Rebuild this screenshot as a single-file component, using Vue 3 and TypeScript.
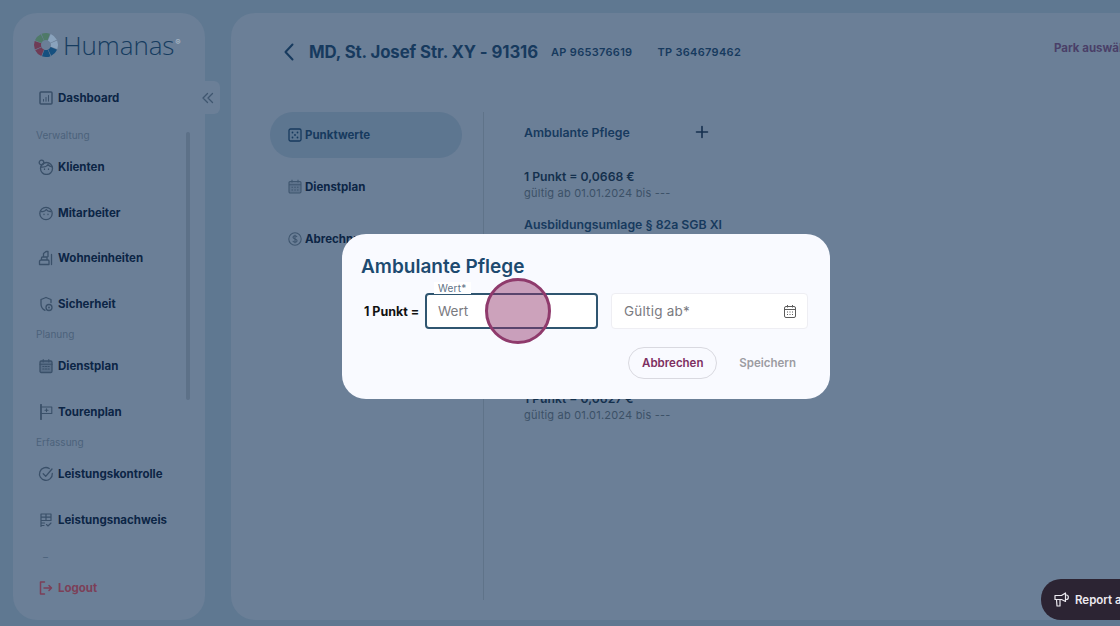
<script setup lang="ts">
type NavRow = { label: string; icon: string } | { section: string }

const navRows: NavRow[] = [
  { label: 'Dashboard', icon: 'chart' },
  { section: 'Verwaltung' },
  { label: 'Klienten', icon: 'client' },
  { label: 'Mitarbeiter', icon: 'face' },
  { label: 'Wohneinheiten', icon: 'home' },
  { label: 'Sicherheit', icon: 'shield' },
  { section: 'Planung' },
  { label: 'Dienstplan', icon: 'calendar' },
  { label: 'Tourenplan', icon: 'flag' },
  { section: 'Erfassung' },
  { label: 'Leistungskontrolle', icon: 'check' },
  { label: 'Leistungsnachweis', icon: 'sheet' },
  { section: '–' }
]

const logoColors = ['#4f7a68', '#8aa3bd', '#8aa3bd', '#16507f', '#16507f', '#6f3c56', '#6f3c56', '#4f7a68']
const segLen = 2 * Math.PI * 8.5
</script>

<template>
  <div class="page">
    <aside class="sidebar">
      <div class="logo">
        <svg width="26" height="26" viewBox="0 0 26 26" class="logo-ring">
          <circle
            v-for="(c, i) in logoColors"
            :key="i"
            cx="13"
            cy="13"
            r="8.5"
            fill="none"
            :stroke="c"
            stroke-width="7"
            :stroke-dasharray="`${segLen / 8 - 0.6} ${segLen - segLen / 8 + 0.6}`"
            :transform="`rotate(${i * 45 - 112} 13 13)`"
          />
        </svg>
        <span class="logo-text">Humanas</span><span class="logo-reg">®</span>
      </div>

      <nav class="nav">
        <template v-for="row in navRows" :key="'section' in row ? row.section : row.label">
          <div v-if="'section' in row" class="nav-section" :class="{ cut: row.section === '–' }">{{ row.section }}</div>
          <div v-else class="nav-item" :class="{ first: row.label === 'Dashboard' }">
            <svg class="nav-icon" width="16" height="16" viewBox="0 0 16 16" fill="none" stroke="currentColor" stroke-width="1.3" stroke-linecap="round" stroke-linejoin="round">
              <template v-if="row.icon === 'chart'">
                <rect x="2" y="2" width="12" height="12" rx="1" stroke-width="1.5" />
                <path d="M5.5 11.2V9.5M8 11.2V7.5M10.5 11.2V5.5" stroke-width="1" />
              </template>
              <template v-else-if="row.icon === 'client'">
                <circle cx="8.5" cy="9.5" r="6" />
                <circle cx="3.5" cy="3.5" r="2.3" />
                <path d="M3.2 8c2.3.3 5.800-.5 6.800-2.400.8 1.100 2.300 2 4.200 2.200M6.500 10v.4M10.500 10v.4" />
              </template>
              <template v-else-if="row.icon === 'face'">
                <circle cx="8" cy="8.5" r="6.2" />
                <path d="M3.300 6.500c2 .4 4-.3 5-2 .8 1.400 2.500 2.100 4.300 2M6 9.200v.4M10 9.200v.4" />
              </template>
              <template v-else-if="row.icon === 'home'">
                <path d="M1.500 14.500h9.500v-3.500a1 1 0 0 0-1-1H3a1.500 1.500 0 0 0-1.500 1.500zM3.500 10V8a1 1 0 0 1 1-1H9v3M5.500 7V3.500L8 1.500h2v5M13.500 4.500v10" />
              </template>
              <template v-else-if="row.icon === 'shield'">
                <path d="M13 6.500V3.500L8 1.500 3 3.500V8c0 3 1.800 5.200 4 6.300" />
                <circle cx="11" cy="11.5" r="3" />
                <circle cx="11" cy="11.5" r=".9" fill="currentColor" stroke="none" />
              </template>
              <template v-else-if="row.icon === 'calendar'">
                <rect x="2" y="3" width="12" height="11.5" rx="1.2" fill="currentColor" fill-opacity=".35" />
                <path d="M2 6.200h12M5.200 1.500v2.500M10.800 1.500v2.500M4.800 8.500h1.200M7.400 8.500h1.200M10 8.500h1.200M4.800 11h1.200M7.400 11h1.200M10 11h1.200" stroke-width="1.1" />
              </template>
              <template v-else-if="row.icon === 'flag'">
                <path d="M3 .8v14.400" stroke-width="1.8" />
                <path d="M3 3h10.800v6.500H3M7 6.200h3M8.500 4.800v2.800" stroke-width="1.1" />
              </template>
              <template v-else-if="row.icon === 'check'">
                <path d="M14.300 7.500a6.400 6.400 0 1 1-3-5M5.200 7.800l2.500 2.500 6.300-7.300" />
              </template>
              <template v-else-if="row.icon === 'sheet'">
                <path d="M3 14.500V2h10v6.500H3M3 5.200h10M8 2v6.500M3 11h3.500M3 13.500h3" stroke-width="1.2" />
                <path d="M8.500 12.500l1.500 1.500 3-3" stroke-width="1.1" />
              </template>
            </svg>
            <span>{{ row.label }}</span>
          </div>
        </template>
      </nav>

      <div class="logout">
        <svg width="16" height="16" viewBox="0 0 16 16" fill="none" stroke="currentColor" stroke-width="1.5" stroke-linecap="round" stroke-linejoin="round">
          <path d="M6.500 2H2.500v12h4M6 8h7.500M11 5.500 13.500 8 11 10.500" />
        </svg>
        <span>Logout</span>
      </div>

      <div class="scroll-thumb"></div>
      <button class="collapse">
        <svg width="12" height="12" viewBox="0 0 12 12" fill="none" stroke="currentColor" stroke-width="1.3" stroke-linecap="round" stroke-linejoin="round">
          <path d="M5.500 1.500 1 6l4.500 4.500M10.500 1.500 6 6l4.500 4.500" />
        </svg>
      </button>
    </aside>

    <main class="main">
      <header class="head">
        <svg class="back" width="10" height="18" viewBox="0 0 10 18" fill="none" stroke="currentColor" stroke-width="2" stroke-linecap="round" stroke-linejoin="round">
          <path d="M8.500 1.500 1.500 9l7 7.500" />
        </svg>
        <h1 class="title">MD, St. Josef Str. XY - 91316</h1>
        <span class="code first-code">AP 965376619</span>
        <span class="code">TP 364679462</span>
        <span class="park">Park auswählen</span>
      </header>

      <div class="body">
        <div class="subnav">
          <div class="sub-item active">
            <svg width="14" height="14" viewBox="0 0 14 14" fill="none" stroke="currentColor" stroke-width="1.3">
              <rect x="1" y="1" width="12" height="12" rx="1.5" />
              <circle cx="4.5" cy="4.5" r=".9" fill="currentColor" stroke="none" />
              <circle cx="9.5" cy="4.5" r=".9" fill="currentColor" stroke="none" />
              <circle cx="7" cy="7" r=".9" fill="currentColor" stroke="none" />
              <circle cx="4.5" cy="9.5" r=".9" fill="currentColor" stroke="none" />
              <circle cx="9.5" cy="9.5" r=".9" fill="currentColor" stroke="none" />
            </svg>
            <span>Punktwerte</span>
          </div>
          <div class="sub-item">
            <svg class="muted-icon" width="14" height="15" viewBox="0 0 14 15" fill="none" stroke="currentColor" stroke-width="1.1">
              <rect x="1" y="2.5" width="12" height="11.5" rx="1.2" fill="currentColor" fill-opacity=".3" />
              <path d="M1 5.800h12M4 .8v2.600M10 .8v2.600M3.500 8.300h1.500M6.300 8.300h1.500M9 8.300h1.500M3.500 11h1.500M6.300 11h1.500M9 11h1.500" />
            </svg>
            <span>Dienstplan</span>
          </div>
          <div class="sub-item">
            <svg class="muted-icon" width="14" height="14" viewBox="0 0 14 14" fill="none" stroke="currentColor" stroke-width="1.1">
              <circle cx="7" cy="7" r="6.2" />
              <path d="M9 5c-.3-.9-1-1.300-2-1.300-1.200 0-2 .6-2 1.600 0 2.200 4.100 1.100 4.100 3.400 0 1-.9 1.600-2.100 1.600-1.100 0-1.900-.5-2.200-1.400M7 2.700v8.600" />
            </svg>
            <span>Abrechnung</span>
          </div>
        </div>

        <section class="rates">
          <div class="rates-head">
            <h2>Ambulante Pflege</h2>
            <svg width="14" height="14" viewBox="0 0 14 14" fill="none" stroke="currentColor" stroke-width="1.6" stroke-linecap="round">
              <path d="M7 1.500v11M1.500 7h11" />
            </svg>
          </div>
          <div class="rate">
            <strong>1 Punkt = 0,0668 €</strong>
            <span>gültig ab 01.01.2024 bis ---</span>
          </div>
          <h2 class="rate-title">Ausbildungsumlage § 82a SGB XI</h2>
          <div class="rate covered">
            <strong>1 Punkt = 0,0627 €</strong>
            <span>gültig ab 01.01.2024 bis ---</span>
          </div>
        </section>
      </div>
    </main>

    <div class="report">
      <svg width="15" height="15" viewBox="0 0 15 15" fill="none" stroke="currentColor" stroke-width="1.2" stroke-linejoin="round">
        <path d="M1 3.500h6.500L11.500 1v8.500L7.500 7.500H1zM2.500 7.500h3.500v6.500H3zM11.500 3h.8a2 2 0 0 1 2 2v.5a2 2 0 0 1-2 2h-.8" />
      </svg>
      <span>Report a problem</span>
    </div>

    <div class="dialog">
      <h3 class="dialog-title">Ambulante Pflege</h3>
      <div class="fields">
        <span class="eq">1 Punkt =</span>
        <div class="field focused">
          <span class="float-label">Wert*</span>
          <span class="placeholder">Wert</span>
        </div>
        <div class="field date">
          <span class="placeholder wide">Gültig ab*</span>
          <svg width="14" height="15" viewBox="0 0 14 15" fill="none" stroke="#5b5b5b" stroke-width="1">
            <rect x="1.5" y="2.5" width="11" height="11" rx="1.5" />
            <path d="M1.500 5.500h11M4.500 1v2.500M9.500 1v2.500M4 8h1M6.500 8h1M9 8h1M4 10.500h1M6.500 10.500h1M9 10.500h1" />
          </svg>
        </div>
      </div>
      <div class="actions">
        <button class="btn-cancel">Abbrechen</button>
        <button class="btn-save">Speichern</button>
      </div>
    </div>

    <div class="click-mark"></div>
  </div>
</template>

<style scoped>
.page {
  position: relative;
  width: 1120px;
  height: 626px;
  overflow: hidden;
  display: flex;
  gap: 26px;
  padding: 13px 0 6px 13px;
  box-sizing: border-box;
  background: #5f7891;
  font-family: Inter, "Noto Sans", sans-serif;
  color: #0c2545;
}

/* sidebar */
.sidebar {
  position: relative;
  flex: 0 0 192px;
  display: flex;
  flex-direction: column;
  background: #6b7f97;
  border-radius: 24px;
}
.logo {
  height: 62px;
  flex: none;
  display: flex;
  align-items: center;
  padding: 2px 0 0 20px;
  box-sizing: border-box;
  color: #163c60;
}
.logo-ring {
  margin-right: 4px;
  flex: none;
}
.logo-text {
  font-family: "Open Sans", sans-serif;
  font-weight: 300;
  font-size: 26px;
  letter-spacing: -0.1px;
}
.logo-reg {
  font-size: 8px;
  color: #b7c3d0;
  align-self: flex-start;
  margin: 22px 0 0 1px;
}
.nav {
  flex: 1;
  min-height: 0;
  overflow: hidden;
  padding-left: 23px;
}
.nav-item {
  height: 45.6px;
  display: flex;
  align-items: center;
  gap: 4px;
  padding-left: 2px;
  font-size: 11.5px;
  font-weight: 700;
  color: #0c2545;
}
.nav-item.first {
  margin-bottom: 7px;
}
.nav-icon {
  color: #3a5069;
  flex: none;
}
.nav-section {
  height: 16.7px;
  line-height: 15px;
  font-size: 10px;
  color: #4c627b;
}
.nav-section.cut {
  margin-top: 8px;
  padding-left: 7px;
}
.logout {
  height: 54px;
  flex: none;
  padding: 0 0 11px 25px;
  box-sizing: border-box;
  display: flex;
  align-items: center;
  gap: 4px;
  font-size: 11.5px;
  font-weight: 700;
  color: #7c3f58;
}
.scroll-thumb {
  position: absolute;
  left: 173px;
  top: 119px;
  width: 4px;
  height: 268px;
  border-radius: 2px;
  background: #5d7188;
}
.collapse {
  position: absolute;
  left: 192px;
  top: 68px;
  width: 15px;
  height: 33px;
  padding: 0;
  border: 0;
  border-radius: 0 6px 6px 0;
  background: #6b7f97;
  color: #3f566f;
  display: flex;
  align-items: center;
  justify-content: flex-start;
}
.collapse svg {
  margin-left: -3px;
  flex: none;
}

/* main */
.main {
  flex: 0 0 1100px;
  display: flex;
  flex-direction: column;
  background: #6b7f97;
  border-radius: 24px;
}
.head {
  height: 78px;
  display: flex;
  align-items: center;
  padding: 0 0 0 53px;
  color: #173a5e;
}
.back {
  margin-right: 15px;
  flex: none;
}
.title {
  margin: 0 13px 0 0;
  font-size: 16.8px;
  font-weight: 700;
  letter-spacing: -0.1px;
  white-space: nowrap;
}
.code {
  font-size: 11px;
  font-weight: 600;
  letter-spacing: 0.3px;
  white-space: nowrap;
}
.first-code {
  margin-right: 25px;
}
.park {
  position: absolute;
  left: 1054px;
  top: 41px;
  font-size: 11.5px;
  font-weight: 700;
  color: #4a3f68;
  white-space: nowrap;
}
.body {
  flex: 1;
  display: flex;
  padding: 21px 0 20px 39px;
  min-height: 0;
}
.subnav {
  flex: 0 0 192px;
  margin-right: 21px;
  display: flex;
  flex-direction: column;
  gap: 6.5px;
}
.sub-item {
  height: 45.5px;
  display: flex;
  align-items: center;
  gap: 3px;
  padding-left: 18px;
  border-radius: 23px;
  font-size: 11.5px;
  font-weight: 700;
  color: #0c2545;
  white-space: nowrap;
}
.sub-item svg {
  flex: none;
}
.sub-item.active {
  background: #5d7690;
  color: #173a5e;
}
.muted-icon {
  color: #3f566f;
}
.rates {
  flex: 1;
  border-left: 1px solid #5f7389;
  padding-left: 40px;
  color: #173a5e;
}
.rates-head {
  display: flex;
  align-items: center;
  gap: 65px;
  height: 40px;
  margin-bottom: 16px;
}
.rates-head h2,
.rate-title {
  margin: 0;
  font-size: 12.3px;
  font-weight: 600;
}
.rates-head svg {
  color: #16304f;
  flex: none;
}
.rate {
  display: flex;
  flex-direction: column;
  line-height: 17px;
  font-size: 11px;
}
.rate strong {
  font-weight: 600;
  font-size: 12.2px;
  color: #14304d;
}
.rate span {
  color: #3c5167;
  letter-spacing: 0.2px;
}
.rate-title {
  margin-top: 14px;
  line-height: 17px;
}
.covered {
  margin-top: 157px;
}

/* report button */
.report {
  position: absolute;
  left: 1041px;
  top: 579px;
  width: 130px;
  height: 41px;
  box-sizing: border-box;
  border-radius: 20px;
  background: #2c2433;
  color: #eceaf0;
  display: flex;
  align-items: center;
  gap: 6px;
  padding-left: 13px;
  font-size: 11.5px;
  font-weight: 600;
  white-space: nowrap;
}
.report svg {
  flex: none;
}

/* dialog */
.dialog {
  position: absolute;
  left: 342px;
  top: 234px;
  width: 488px;
  height: 165px;
  box-sizing: border-box;
  padding: 21px 22px 0 19px;
  background: #f9faff;
  border-radius: 24px;
}
.dialog-title {
  margin: 0;
  font-size: 19px;
  line-height: 24px;
  font-weight: 600;
  color: #1d4a70;
}
.fields {
  display: flex;
  align-items: center;
  margin-top: 14px;
  padding-left: 3px;
}
.eq {
  width: 61px;
  flex: none;
  font-size: 12.5px;
  font-weight: 700;
  color: #111;
  white-space: nowrap;
}
.field {
  position: relative;
  height: 36px;
  box-sizing: border-box;
  display: flex;
  align-items: center;
  justify-content: space-between;
  background: #fff;
  border-radius: 4px;
}
.focused {
  width: 173px;
  padding-left: 11px;
  margin-right: 13px;
  border: 2px solid #2f5570;
}
.date {
  width: 197px;
  padding: 0 10px 0 12px;
  border: 1px solid #eeeef3;
}
.float-label {
  position: absolute;
  left: 7px;
  top: -13px;
  padding: 0 5px 0 4px;
  background: #fff;
  font-size: 10px;
  line-height: 12px;
  color: #5f7388;
  letter-spacing: 0.2px;
}
.placeholder {
  font-size: 13.5px;
  color: #7a7a7f;
}
.wide {
  letter-spacing: 0.2px;
}
.actions {
  display: flex;
  align-items: center;
  justify-content: flex-end;
  gap: 23px;
  margin-top: 18px;
  padding-right: 12px;
}
.actions button {
  font-family: inherit;
  font-size: 11.5px;
  font-weight: 600;
  background: none;
  padding: 0;
}
.btn-cancel {
  width: 89px;
  height: 32px;
  margin-right: -1px;
  border: 1px solid #d9d9e0;
  border-radius: 16px;
  color: #7d2f60;
}
.btn-save {
  border: 0;
  color: #9c9ca2;
}

/* click marker of the recording */
.click-mark {
  position: absolute;
  left: 485px;
  top: 278px;
  width: 66px;
  height: 66px;
  box-sizing: border-box;
  border: 3px solid #8f3a6c;
  border-radius: 50%;
  background: rgba(143, 48, 105, 0.45);
}
</style>
